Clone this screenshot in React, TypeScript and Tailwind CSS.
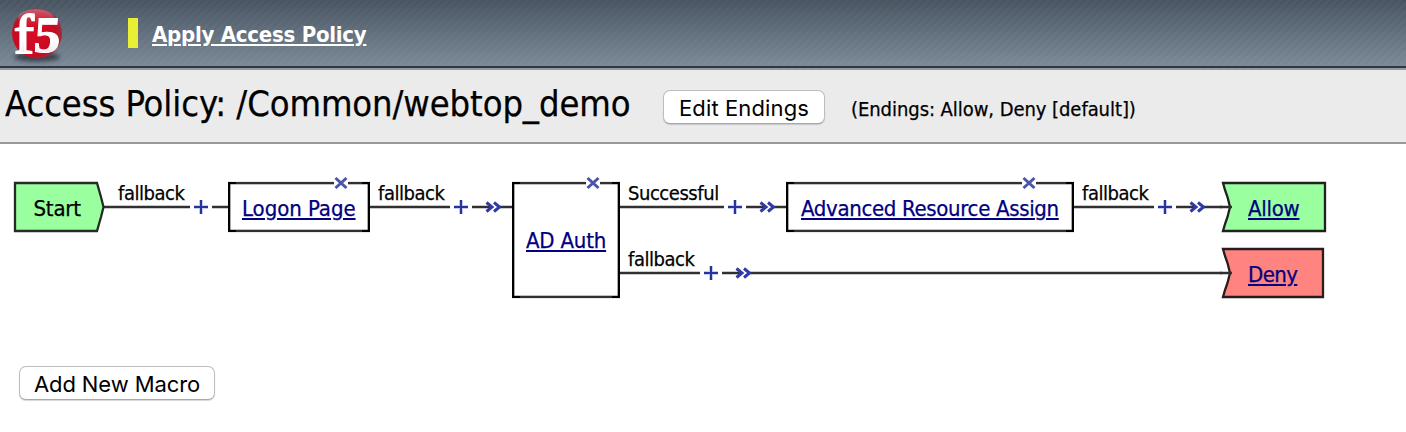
import React from "react";

const FONT = "font-['DejaVu_Sans_Condensed','DejaVu_Sans',sans-serif] [font-stretch:condensed]";

function Logo() {
  return (
    <svg width="72" height="66" viewBox="0 0 72 66" className="block shrink-0">
      <defs>
        <radialGradient id="ball" cx="0.45" cy="0.52" r="0.56">
          <stop offset="0" stopColor="#d80c25" />
          <stop offset="0.75" stopColor="#c60b22" />
          <stop offset="1" stopColor="#96303f" />
        </radialGradient>
        <linearGradient id="shine" x1="0" y1="0" x2="0" y2="1">
          <stop offset="0" stopColor="#fff" stopOpacity="0.3" />
          <stop offset="1" stopColor="#fff" stopOpacity="0" />
        </linearGradient>
        <linearGradient id="letters" x1="0" y1="0" x2="0" y2="1">
          <stop offset="0" stopColor="#fff" />
          <stop offset="0.6" stopColor="#fff" />
          <stop offset="1" stopColor="#d9dcdf" />
        </linearGradient>
        <filter id="soft" x="-20%" y="-80%" width="140%" height="260%">
          <feGaussianBlur stdDeviation="2" />
        </filter>
      </defs>
      <ellipse cx="37" cy="57" rx="23" ry="4.5" fill="#222c36" opacity="0.75" filter="url(#soft)" />
      <circle cx="37" cy="33.5" r="25" fill="url(#ball)" />
      <ellipse cx="36" cy="18" rx="18" ry="9" fill="url(#shine)" />
      <g fill="url(#letters)" fontFamily="Liberation Serif, serif">
        <text transform="translate(14 52.5) scale(1.1 1)" fontSize="54" stroke="#fff" strokeWidth="2">
          f
        </text>
        <text transform="translate(33 52) skewX(-4) scale(1.04 1)" fontSize="51" fontWeight="700" stroke="#fff" strokeWidth="1">
          5
        </text>
      </g>
    </svg>
  );
}

function MacButton({ children, className }: { children: React.ReactNode; className: string }) {
  return (
    <button
      className={`h-[34px] shrink-0 whitespace-nowrap rounded-[7px] border border-[#bdbdbd] border-b-[#a9a9a9] bg-white text-center font-[Inter,sans-serif] text-[22px] leading-[34px] text-black shadow-[0_1px_1px_rgba(0,0,0,0.16)] ${className}`}
    >
      {children}
    </button>
  );
}

function Plus({ x, y }: { x: number; y: number }) {
  return (
    <g>
      <path d={`M${x - 7} ${y}H${x + 7}M${x} ${y - 7}V${y + 7}`} stroke="#c3cdf0" strokeWidth="4" />
      <path d={`M${x - 7} ${y}H${x + 7}M${x} ${y - 7}V${y + 7}`} stroke="#27329a" strokeWidth="2" />
    </g>
  );
}

function Chevrons({ x, y }: { x: number; y: number }) {
  return (
    <path
      d={`M${x + 0.5} ${y - 4.5}L${x + 6} ${y}L${x + 0.5} ${y + 4.5}M${x + 8} ${y - 4.5}L${x + 13.5} ${y}L${x + 8} ${y + 4.5}`}
      fill="none"
      stroke="#3039a4"
      strokeWidth="3"
    />
  );
}

function Cross({ x }: { x: number }) {
  return (
    <g>
      <rect x={x - 7} y="176" width="14" height="14" fill="#fff" />
      <path d={`M${x - 5.5} 178L${x + 5.5} 188M${x + 5.5} 178L${x - 5.5} 188`} stroke="#4a53ad" strokeWidth="3" />
    </g>
  );
}

function Box({ x, w, h }: { x: number; w: number; h: number }) {
  return (
    <g>
      <rect x={x + 1.2} y="183.1" width={w - 2.4} height={h - 2.2} fill="#fff" stroke="#303030" strokeWidth="2.4" />
      <path
        d={`M${x + 8} 183H${x + 1}V${181 + h}H${x + 8}M${x + w - 8} 183H${x + w - 1}V${181 + h}H${x + w - 8}`}
        fill="none"
        stroke="#000"
        strokeWidth="2"
      />
    </g>
  );
}

function Wires() {
  return (
    <svg width="1406" height="180" viewBox="0 144 1406 180" className="block">
      <g stroke="#303030" strokeWidth="2.4" fill="none">
        <path d="M104 207H190M212 207H228M370 207H450M472 207H490M500 207H512M620 207H724M746 207H764M774 207H786M1074 207H1154M1176 207H1194M1204 207H1222" />
        <path d="M620 273H700M722 273H740M750 273H1222" />
      </g>
      <path d="M15 183H97L99 190L101 197L103.5 207L101 217L99 224L97 231H15Z" fill="#99ff9f" stroke="#262b27" strokeWidth="2.3" />
      <path d="M1223 183H1325V231H1223L1225 224L1227.5 217L1230 207L1227.5 197L1225 190Z" fill="#99ff9f" stroke="#1c241d" strokeWidth="2.3" />
      <path d="M1223 249H1323V297H1223L1225 290L1227.5 283L1230 273L1227.5 263L1225 256Z" fill="#ff837e" stroke="#281c1c" strokeWidth="2.3" />
      <path d="M1220 207H1232M1220 273H1232" stroke="#303030" strokeWidth="2.3" />
      <Box x={228} w={142} h={50} />
      <Box x={512} w={108} h={116} />
      <Box x={786} w={288} h={50} />
      <Cross x={341} />
      <Cross x={593} />
      <Cross x={1029} />
      <Plus x={201} y={207} />
      <Plus x={461} y={207} />
      <Plus x={735} y={207} />
      <Plus x={1165} y={207} />
      <Plus x={711} y={273} />
      <Chevrons x={486} y={207} />
      <Chevrons x={760} y={207} />
      <Chevrons x={1190} y={207} />
      <Chevrons x={736} y={273} />
    </svg>
  );
}

const INK = "[-webkit-text-stroke:0.25px_currentColor]";
const LABEL = `absolute whitespace-nowrap text-[20px] leading-6 tracking-[-0.45px] text-black ${INK}`;
const NODE = `absolute whitespace-nowrap text-[22px] leading-6 ${INK}`;
const LINK = `${NODE} text-[#000080] underline decoration-2 underline-offset-[2px]`;

export default function App() {
  return (
    <div className={`flex h-[432px] w-[1406px] flex-col overflow-hidden bg-white ${FONT}`}>
      <header className="flex h-[68px] shrink-0 items-center gap-14 border-b-2 border-[#2b3744] bg-[repeating-linear-gradient(135deg,rgba(255,255,255,0.04)_0px,rgba(255,255,255,0)_2.83px,rgba(255,255,255,0.04)_5.66px),linear-gradient(to_bottom,#475360,#7a8997)]">
        <Logo />
        <div className="flex items-center gap-3.5">
          <span className="h-[30px] w-[10px] bg-[#e9ef35]" />
          <a
            href="#"
            className="whitespace-nowrap pt-1 text-[22px] font-bold leading-6 tracking-[-0.25px] text-white underline decoration-2 underline-offset-[2px]"
          >
            Apply Access Policy
          </a>
        </div>
      </header>

      <section className="flex h-[76px] shrink-0 items-center gap-[26px] border-y-2 border-[#999] bg-[#ebebeb] pl-[5px] pt-0.5">
        <h1 className={`w-[632px] whitespace-nowrap pb-1.5 text-[36px] leading-10 tracking-[-0.09px] text-black ${INK}`}>
          Access Policy: /Common/webtop_demo
        </h1>
        <MacButton className="w-[162px] tracking-[0.12px]">Edit Endings</MacButton>
        <span className={`whitespace-nowrap pt-[3px] text-[20px] leading-6 tracking-[-0.06px] text-black ${INK}`}>
          (Endings: Allow, Deny [default])
        </span>
      </section>

      <main className="flex flex-col items-start gap-[42px]">
        <div className="relative h-[180px]">
          <Wires />
          <span className={`${LABEL} left-[118px] top-[37px]`}>fallback</span>
          <span className={`${LABEL} left-[378px] top-[37px]`}>fallback</span>
          <span className={`${LABEL} left-[628px] top-[37px]`}>Successful</span>
          <span className={`${LABEL} left-[628px] top-[103px]`}>fallback</span>
          <span className={`${LABEL} left-[1082px] top-[37px]`}>fallback</span>
          <span className={`${NODE} left-[33.5px] top-[53px] tracking-[-0.2px] text-black`}>Start</span>
          <a href="#" className={`${LINK} left-[242px] top-[53px] tracking-[-0.05px]`}>Logon Page</a>
          <a href="#" className={`${LINK} left-[526px] top-[85px] tracking-[-0.2px]`}>AD Auth</a>
          <a href="#" className={`${LINK} left-[801px] top-[53px] tracking-[-0.33px]`}>Advanced Resource Assign</a>
          <a href="#" className={`${LINK} left-[1248px] top-[53px] tracking-[-0.28px]`}>Allow</a>
          <a href="#" className={`${LINK} left-[1248px] top-[119px] tracking-[-0.6px]`}>Deny</a>
        </div>
        <div className="pl-[19px]">
          <MacButton className="w-[196px] tracking-[-0.1px]">Add New Macro</MacButton>
        </div>
      </main>
    </div>
  );
}
